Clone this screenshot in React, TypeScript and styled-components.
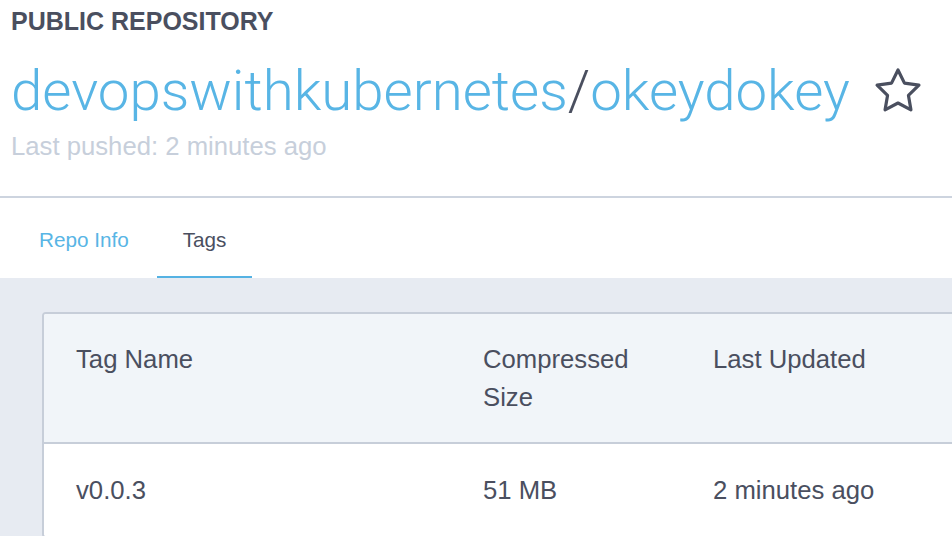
import React from "react";
import styled, { createGlobalStyle } from "styled-components";

const GlobalStyle = createGlobalStyle`
  html, body {
    margin: 0;
    padding: 0;
    background: #ffffff;
    overflow: hidden;
  }
  body {
    font-family: "Liberation Sans", Arial, sans-serif;
    color: #4a4f5f;
  }
`;

const Page = styled.div`
  width: 952px;
  height: 536px;
  display: flex;
  flex-direction: column;
  overflow: hidden;
`;

const RepoHeader = styled.header`
  padding: 6px 11px 35px;
  border-bottom: 2px solid #cdd4df;
`;

const Kicker = styled.div`
  font-size: 25px;
  font-weight: 700;
  line-height: 30px;
  color: #4a4f5f;
`;

const TitleRow = styled.div`
  display: flex;
  align-items: center;
  gap: 24px;
  margin-top: 23px;
`;

const Title = styled.h1`
  margin: 0;
  font-family: Roboto, "Liberation Sans", sans-serif;
  font-weight: 300;
  font-size: 56.4px;
  line-height: 64px;
  color: #58b5e5;
  white-space: nowrap;
`;

const Slash = styled.span`
  color: #4a4f5f;
`;

const StarButton = styled.button`
  border: 0;
  background: none;
  padding: 0;
  margin-top: -2px;
  display: flex;
  cursor: pointer;
`;

const Pushed = styled.div`
  margin-top: 8px;
  font-size: 25.7px;
  line-height: 30px;
  color: #c7cfdb;
`;

const TabBar = styled.nav`
  display: flex;
  gap: 2px;
  padding-left: 13px;
  background: #ffffff;
`;

const Tab = styled.a<{ $active?: boolean }>`
  display: flex;
  align-items: center;
  height: 80px;
  box-sizing: border-box;
  padding: 6px 26px 0;
  font-size: 20.7px;
  color: ${(p) => (p.$active ? "#4a4f5f" : "#58b5e5")};
  border-bottom: 2px solid ${(p) => (p.$active ? "#55b2e3" : "transparent")};
  text-decoration: none;
  cursor: pointer;
`;

const Content = styled.main`
  flex: 1;
  background: #e7ebf2;
  padding: 34px 0 0 42px;
`;

const Card = styled.div`
  width: 1100px;
  border: 2px solid #c7ced9;
  border-radius: 4px;
  background: #ffffff;
  overflow: hidden;
`;

const Row = styled.div<{ $head?: boolean }>`
  display: grid;
  grid-template-columns: 407px 230px 1fr;
  background: ${(p) => (p.$head ? "#f1f5f9" : "#ffffff")};
  border-bottom: ${(p) => (p.$head ? "2px solid #c7ced9" : "0")};
  height: ${(p) => (p.$head ? "130px" : "auto")};
  box-sizing: border-box;
  padding: ${(p) => (p.$head ? "26px 0 0" : "27px 0")};
`;

const Cell = styled.div`
  padding: 0 32px;
  font-size: 25.7px;
  line-height: 38px;
  color: #4a4f5f;
`;

const StarIcon = () => (
  <svg width="48" height="46" viewBox="0 0 48 46" fill="none">
    <polygon
      points="24,3 30.47,16.1 44.92,18.2 34.46,28.4 36.93,42.8 24,36 11.07,42.8 13.54,28.4 3.08,18.2 17.53,16.1"
      stroke="#4a4f5f"
      strokeWidth="3.2"
      strokeLinejoin="round"
    />
  </svg>
);

const tags = [{ name: "v0.0.3", size: "51 MB", updated: "2 minutes ago" }];

export default function App() {
  return (
    <Page>
      <GlobalStyle />
      <RepoHeader>
        <Kicker>PUBLIC REPOSITORY</Kicker>
        <TitleRow>
          <Title>
            devopswithkubernetes<Slash>/</Slash>okeydokey
          </Title>
          <StarButton aria-label="Star">
            <StarIcon />
          </StarButton>
        </TitleRow>
        <Pushed>Last pushed: 2 minutes ago</Pushed>
      </RepoHeader>
      <TabBar>
        <Tab>Repo Info</Tab>
        <Tab $active>Tags</Tab>
      </TabBar>
      <Content>
        <Card>
          <Row $head>
            <Cell>Tag Name</Cell>
            <Cell>Compressed Size</Cell>
            <Cell>Last Updated</Cell>
          </Row>
          {tags.map((t) => (
            <Row key={t.name}>
              <Cell>{t.name}</Cell>
              <Cell>{t.size}</Cell>
              <Cell>{t.updated}</Cell>
            </Row>
          ))}
        </Card>
      </Content>
    </Page>
  );
}
